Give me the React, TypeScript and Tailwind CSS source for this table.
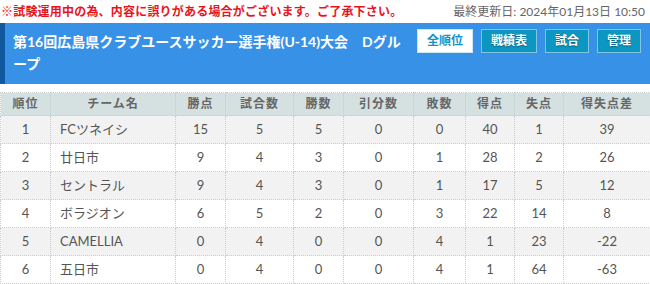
import React from 'react';

type Row = {
  rank: number;
  team: string;
  pts: number;
  played: number;
  win: number;
  draw: number;
  lose: number;
  gf: number;
  ga: number;
  gd: number;
};

const rows: Row[] = [
  { rank: 1, team: 'FCツネイシ', pts: 15, played: 5, win: 5, draw: 0, lose: 0, gf: 40, ga: 1, gd: 39 },
  { rank: 2, team: '廿日市', pts: 9, played: 4, win: 3, draw: 0, lose: 1, gf: 28, ga: 2, gd: 26 },
  { rank: 3, team: 'セントラル', pts: 9, played: 4, win: 3, draw: 0, lose: 1, gf: 17, ga: 5, gd: 12 },
  { rank: 4, team: 'ボラジオン', pts: 6, played: 5, win: 2, draw: 0, lose: 3, gf: 22, ga: 14, gd: 8 },
  { rank: 5, team: 'CAMELLIA', pts: 0, played: 4, win: 0, draw: 0, lose: 4, gf: 1, ga: 23, gd: -22 },
  { rank: 6, team: '五日市', pts: 0, played: 4, win: 0, draw: 0, lose: 4, gf: 1, ga: 64, gd: -63 },
];

const heads = ['順位', 'チーム名', '勝点', '試合数', '勝数', '引分数', '敗数', '得点', '失点', '得失点差'];
const widths = ['w-[50px]', 'w-[125px]', 'w-[50px]', 'w-[68px]', 'w-[50px]', 'w-[70px]', 'w-[52px]', 'w-[49px]', 'w-[49px]', 'w-[87px]'];

const NavButton: React.FC<{ label: string; active?: boolean }> = ({ label, active }) => (
  <button
    className={
      active
        ? 'h-[24px] px-[9px] bg-white text-[#1a8fc4] border border-[#cfe6f3] text-[12px] font-bold leading-none'
        : 'h-[24px] px-[9px] bg-[#0b97c1] text-white border border-[#7fc6e0] text-[12px] font-bold leading-none [text-shadow:0_1px_1px_rgba(0,0,0,0.35)]'
    }
  >
    {label}
  </button>
);

const App: React.FC = () => {
  return (
    <div className="w-[650px] h-[284px] overflow-hidden bg-white font-['Lato','Noto_Sans_CJK_JP',sans-serif]">
      {/* notice + update date */}
      <div className="flex justify-between items-center h-[23px] pl-[1px] pr-[5px] text-[12px]">
        <p className="text-[#e8141c] font-bold tracking-[0.2px]">※試験運用中の為、内容に誤りがある場合がございます。ご了承下さい。</p>
        <p className="text-[#666]">最終更新日: 2024年01月13日 10:50</p>
      </div>

      {/* title bar */}
      <div className="flex h-[61px] bg-[#3791e7] border-l-[5px] border-[#11599f]">
        <h1 className="w-[396px] pl-[8px] pt-[8px] text-white text-[14px] font-bold leading-[22px]">
          第16回広島県クラブユースサッカー選手権(U-14)大会　Dグループ
        </h1>
        <div className="flex gap-[8px] pt-[6px] pl-[16px]">
          <NavButton label="全順位" active />
          <NavButton label="戦績表" />
          <NavButton label="試合" />
          <NavButton label="管理" />
        </div>
      </div>

      {/* standings */}
      <table className="mt-[8px] w-[650px] table-fixed border-collapse text-[13px] text-[#555]">
        <thead>
          <tr className="h-[23px] bg-[#d5e1e1]">
            {heads.map((h, i) => (
              <th key={h} className={`${widths[i]} border border-dotted border-[#c4cccc] text-[12px] font-bold text-[#666] tracking-[1px]`}>
                {h}
              </th>
            ))}
          </tr>
        </thead>
        <tbody>
          {rows.map((r) => (
            <tr key={r.rank} className={`h-[28px] ${r.rank % 2 === 1 ? 'bg-[#f2f2f2]' : 'bg-white'}`}>
              <td className="border border-dotted border-[#ccc] text-center">{r.rank}</td>
              <td className="border border-dotted border-[#ccc] pl-[9px]">{r.team}</td>
              <td className="border border-dotted border-[#ccc] text-center">{r.pts}</td>
              <td className="border border-dotted border-[#ccc] text-center">{r.played}</td>
              <td className="border border-dotted border-[#ccc] text-center">{r.win}</td>
              <td className="border border-dotted border-[#ccc] text-center">{r.draw}</td>
              <td className="border border-dotted border-[#ccc] text-center">{r.lose}</td>
              <td className="border border-dotted border-[#ccc] text-center">{r.gf}</td>
              <td className="border border-dotted border-[#ccc] text-center">{r.ga}</td>
              <td className="border border-dotted border-[#ccc] text-center">{r.gd}</td>
            </tr>
          ))}
        </tbody>
      </table>
    </div>
  );
};

export default App;
